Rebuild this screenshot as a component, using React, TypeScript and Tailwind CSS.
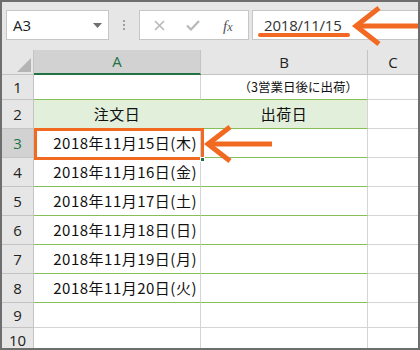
import React from "react";

const jp = { fontFamily: '"Noto Sans CJK JP", "Noto Sans", sans-serif' };
const ui = { fontFamily: '"Open Sans", "Noto Sans", sans-serif' };

const dates = [
  "2018年11月15日(木)",
  "2018年11月16日(金)",
  "2018年11月17日(土)",
  "2018年11月18日(日)",
  "2018年11月19日(月)",
  "2018年11月20日(火)",
];

function RowHead({ n, sel, h }: { n: number; sel?: boolean; h: string }) {
  return (
    <div
      className={`w-[32px] shrink-0 flex items-center justify-center border-r border-b border-[#c4c4c4] text-[15px] ${h} ${
        sel ? "bg-[#d2d2d2] text-[#217346]" : "bg-[#e6e6e6] text-[#222]"
      }`}
      style={ui}
    >
      {n}
    </div>
  );
}

export default function App() {
  const rowHeights = ["h-[29px]", "h-[29px]", "h-[29px]", "h-[29px]", "h-[29px]", "h-[29px]"];
  return (
    <div className="relative w-[420px] h-[350px] overflow-hidden border-2 border-[#6e6e6e] bg-[#e6e6e6]">
      {/* toolbar */}
      <div className="flex items-center h-[30px] mt-[8px] ml-[4px]">
        <div className="w-[103px] h-[30px] bg-white border border-[#c6c6c6] flex items-center justify-between pl-[6px] pr-[6px]">
          <span className="text-[15px] text-[#222]" style={ui}>A3</span>
          <svg width="9" height="5" viewBox="0 0 9 5"><polygon points="0,0 9,0 4.5,5" fill="#707070" /></svg>
        </div>
        <div className="w-[30px] flex flex-col items-center gap-[2px]">
          <div className="w-[2px] h-[2px] bg-[#a0a0a0]" />
          <div className="w-[2px] h-[2px] bg-[#a0a0a0]" />
          <div className="w-[2px] h-[2px] bg-[#a0a0a0]" />
        </div>
        <div className="w-[110px] h-[30px] bg-white border border-[#c6c6c6] relative">
          <svg className="absolute left-[14px] top-[9px]" width="11" height="11" viewBox="0 0 11 11">
            <path d="M1 1 L10 10 M10 1 L1 10" stroke="#b8b8b8" strokeWidth="1.6" />
          </svg>
          <svg className="absolute left-[46px] top-[9px]" width="14" height="11" viewBox="0 0 14 11">
            <path d="M1 5.5 L5 9.5 L13 1" stroke="#b8b8b8" strokeWidth="2.2" fill="none" />
          </svg>
          <span className="absolute left-[83px] top-[4px] text-[15px] italic text-[#555]" style={{ fontFamily: '"Liberation Serif", serif' }}>
            f<span className="text-[12px]">x</span>
          </span>
        </div>
        <div className="ml-[3px] flex-1 h-[30px] bg-white border-y border-l border-[#c6c6c6] flex items-center pl-[11px]">
          <span className="text-[15px] text-[#333] tracking-[-0.2px]" style={ui}>2018/11/15</span>
        </div>
      </div>

      {/* grid */}
      <div className="mt-[10px] flex flex-col bg-white">
        {/* header */}
        <div className="flex h-[25px]">
          <div className="w-[32px] shrink-0 bg-[#e6e6e6] border-r border-b border-[#c4c4c4] relative">
            <svg className="absolute right-[2px] bottom-[2px]" width="14" height="14" viewBox="0 0 14 14">
              <polygon points="14,0 14,14 0,14" fill="#b4b4b4" />
            </svg>
          </div>
          <div className="w-[167px] shrink-0 bg-[#d2d2d2] border-r border-[#c4c4c4] border-b-2 border-b-[#217346] flex items-center justify-center text-[15px] text-[#217346]" style={ui}>A</div>
          <div className="w-[167px] shrink-0 bg-[#e6e6e6] border-r border-b border-[#c4c4c4] flex items-center justify-center text-[15px] text-[#222]" style={ui}>B</div>
          <div className="flex-1 bg-[#e6e6e6] border-b border-[#c4c4c4] flex items-center justify-center text-[15px] text-[#222]" style={ui}>C</div>
        </div>
        {/* row 1 */}
        <div className="flex h-[25px]">
          <RowHead n={1} h="h-[25px]" />
          <div className="w-[167px] shrink-0 border-r border-[#d4d4d4] border-b border-b-[#86bf55]" />
          <div className="w-[167px] shrink-0 border-r border-[#d4d4d4] border-b border-b-[#86bf55] flex items-center justify-end pr-[9px] text-[12.5px] text-[#111]" style={jp}>
            （3営業日後に出荷）
          </div>
          <div className="flex-1 border-b border-[#d4d4d4]" />
        </div>
        {/* row 2 */}
        <div className="flex h-[29px]">
          <RowHead n={2} h="h-[29px]" />
          <div className="w-[167px] shrink-0 bg-[#e2efda] border-r border-r-[#e2efda] border-b border-b-[#86bf55] flex items-center justify-center text-[15px] text-[#111] tracking-[0.5px]" style={jp}>注文日</div>
          <div className="w-[167px] shrink-0 bg-[#e2efda] border-r border-[#d4d4d4] border-b border-b-[#86bf55] flex items-center justify-center text-[15px] text-[#111] tracking-[0.5px]" style={jp}>出荷日</div>
          <div className="flex-1 border-b border-[#d4d4d4]" />
        </div>
        {dates.map((d, i) => (
          <div key={d} className={`flex ${rowHeights[i]}`}>
            <RowHead n={i + 3} sel={i === 0} h={rowHeights[i]} />
            <div className="w-[167px] shrink-0 border-r border-[#d4d4d4] border-b border-b-[#86bf55] flex items-center justify-end pr-[3px] text-[15px] text-[#111] tracking-[0.5px]" style={jp}>{d}</div>
            <div className="w-[167px] shrink-0 border-r border-[#d4d4d4] border-b border-b-[#86bf55]" />
            <div className="flex-1 border-b border-[#d4d4d4]" />
          </div>
        ))}
        {/* row 9 */}
        <div className="flex h-[25px]">
          <RowHead n={9} h="h-[25px]" />
          <div className="w-[167px] shrink-0 border-r border-b border-[#d4d4d4]" />
          <div className="w-[167px] shrink-0 border-r border-b border-[#d4d4d4]" />
          <div className="flex-1 border-b border-[#d4d4d4]" />
        </div>
        {/* row 10 */}
        <div className="flex h-[25px]">
          <RowHead n={10} h="h-[25px]" />
          <div className="w-[167px] shrink-0 border-r border-[#d4d4d4]" />
          <div className="w-[167px] shrink-0 border-r border-[#d4d4d4]" />
          <div className="flex-1" />
        </div>
      </div>

      {/* overlays */}
      <div className="absolute left-[256px] top-[31px] w-[92px] h-[4px] rounded-full bg-[#f26a22]" />
      <svg className="absolute left-[348px] top-[3px]" width="72" height="44" viewBox="0 0 72 44">
        <path d="M29 3 L6 21 L29 39" stroke="#f26a22" strokeWidth="5" fill="none" />
        <path d="M7 21 L72 21" stroke="#f26a22" strokeWidth="5" />
      </svg>
      <div className="absolute left-[32px] top-[126px] w-[170px] h-[32px] border-[3px] border-[#f26a22]" />
      <div className="absolute left-[198px] top-[155px] w-[5px] h-[5px] bg-[#217346] border border-white" />
      <svg className="absolute left-[200px] top-[120px]" width="72" height="44" viewBox="0 0 72 44">
        <path d="M28 5 L6 22 L28 39" stroke="#f26a22" strokeWidth="5" fill="none" />
        <path d="M7 22 L70 22" stroke="#f26a22" strokeWidth="5" />
      </svg>
    </div>
  );
}
